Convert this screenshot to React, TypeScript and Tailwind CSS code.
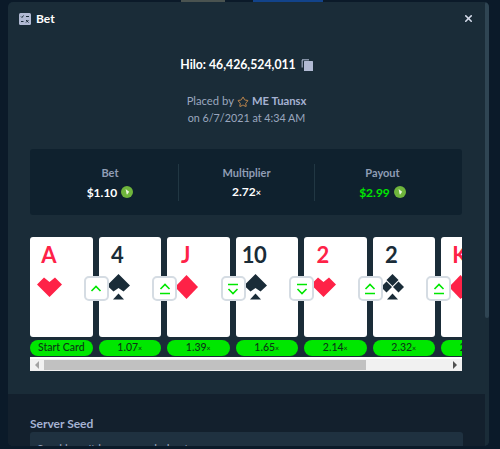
import { Star, X } from "lucide-react";

type Suit = "heart" | "spade" | "diamond" | "club";
type Arrow = "up" | "upEq" | "downEq";

interface CardData {
  rank: string;
  suit: Suit;
  payout: string;
  arrow?: Arrow;
}

const cards: CardData[] = [
  { rank: "A", suit: "heart", payout: "Start Card" },
  { rank: "4", suit: "spade", payout: "1.07", arrow: "up" },
  { rank: "J", suit: "diamond", payout: "1.39", arrow: "upEq" },
  { rank: "10", suit: "spade", payout: "1.65", arrow: "downEq" },
  { rank: "2", suit: "heart", payout: "2.14", arrow: "downEq" },
  { rank: "2", suit: "club", payout: "2.32", arrow: "upEq" },
  { rank: "K", suit: "diamond", payout: "2.72", arrow: "upEq" },
];

function SuitIcon({ suit }: { suit: Suit }) {
  if (suit === "heart") {
    return (
      <svg width="25" height="26" viewBox="0 0 25 26" fill="#fe2247">
        <path d="M7 3.5 12.5 8 18 3.5 25 10.5 12.5 23 0 10.5Z" />
      </svg>
    );
  }
  if (suit === "diamond") {
    return (
      <svg width="25" height="26" viewBox="0 0 25 26" fill="#fe2247">
        <path d="M12.5 1 24 13 12.5 25 1 13Z" />
      </svg>
    );
  }
  if (suit === "spade") {
    return (
      <svg width="25" height="26" viewBox="0 0 25 26" fill="#1a2c38">
        <path d="M12.5 0 24 11.5 17.5 17.5 12.5 14 7.5 17.5 1 11.5Z" />
        <path d="M12.5 19.5 18 25.5H7Z" />
      </svg>
    );
  }
  return (
    <svg width="25" height="26" viewBox="0 0 25 26" fill="#1a2c38">
      <path d="M12.5 0 18.5 6 12.5 12 6.5 6Z" />
      <path d="M6.5 7.5 12 13 6.5 18.5 1 13Z" />
      <path d="M18.5 7.5 24 13 18.5 18.5 13 13Z" />
      <path d="M12.5 19.5 18 25.5H7Z" />
    </svg>
  );
}

function ArrowIcon({ arrow }: { arrow: Arrow }) {
  return (
    <svg width="14" height="14" viewBox="0 0 14 14" fill="none" stroke="#00e700" strokeWidth="1.6">
      {arrow === "up" && <path d="M2.5 9 7 4.5 11.5 9" />}
      {arrow === "upEq" && (
        <>
          <path d="M2.5 7 7 2.5 11.5 7" />
          <path d="M2 11.5H12" />
        </>
      )}
      {arrow === "downEq" && (
        <>
          <path d="M2 2.5H12" />
          <path d="M2.5 7 7 11.5 11.5 7" />
        </>
      )}
    </svg>
  );
}

function Coin() {
  return (
    <svg width="12" height="12" viewBox="0 0 12 12">
      <circle cx="6" cy="6" r="6" fill="#6fb53c" />
      <path d="M4.6 3 8.2 5.8 6 8.8 5.4 7.2Z" fill="#e8f5dc" />
    </svg>
  );
}

function PlayingCard({ card }: { card: CardData }) {
  const red = card.suit === "heart" || card.suit === "diamond";
  return (
    <div className="flex w-[62.5px] shrink-0 flex-col">
      <div className="relative flex h-[100px] shrink-0 flex-col rounded-[3px] bg-white pl-[6px] pt-[1px]">
        <div
          className={`flex h-[36px] w-[25px] shrink-0 justify-center text-[22px] font-bold leading-[34px] tracking-tight ${
            red ? "text-[#fe2247]" : "text-[#1a2c38]"
          }`}
        >
          {card.rank}
        </div>
        <div className="pl-[1px]">
          <SuitIcon suit={card.suit} />
        </div>
        {card.arrow && (
          <div className="absolute left-[-15px] top-[39px] flex h-[25px] w-[25px] items-center justify-center rounded-[5px] border-2 border-[#d5dce3] bg-white">
            <ArrowIcon arrow={card.arrow} />
          </div>
        )}
      </div>
      <div className="mt-[3px] flex h-[15.5px] shrink-0 items-center justify-center rounded-full bg-[#00e700] text-[10.5px] font-medium text-[#0b3416]">
        {card.payout}
        {card.arrow && <span className="text-[7px]">×</span>}
      </div>
    </div>
  );
}

function Stat({ label, children }: { label: string; children: React.ReactNode }) {
  return (
    <div className="flex flex-col items-center gap-[5px] border-l border-[#213743] py-[1px] first:border-l-0">
      <div className="text-[11px] font-bold leading-[15px] text-[#8f9db5]">{label}</div>
      <div className="flex h-[15px] items-center gap-1 text-[12px] font-bold leading-[15px]">{children}</div>
    </div>
  );
}

export default function App() {
  return (
    <div className="flex h-[449px] w-[500px] flex-col overflow-hidden bg-[#0b1a29] font-['Lato',sans-serif] text-white">
      <div className="flex h-[2px] shrink-0 pl-[181px]">
        <div className="w-[44px] bg-[#4a5350]" />
        <div className="ml-[28px] w-[70px] bg-[#12438a]" />
      </div>

      <div className="ml-[8px] flex h-[444px] w-[481px] shrink-0 overflow-hidden rounded-[5px] bg-[#1a2c38]">
        <div className="flex w-[477px] shrink-0 flex-col">
          <div className="flex h-[32px] shrink-0 items-center pl-[11px] pr-[11px] pt-[1px]">
            <svg width="12" height="12" viewBox="0 0 12 12" fill="none">
              <rect width="12" height="12" rx="1.5" fill="#b1bad3" />
              <path d="M2 3.5 3 4.5 4.5 2.5M7 3.5H10M2 8.5H4.5M7 7 9.5 9.5M9.5 7 7 9.5" stroke="#1a2c38" strokeWidth="1" />
            </svg>
            <span className="ml-[5px] text-[12px] font-bold">Bet</span>
            <X className="ml-auto text-[#d5dceb]" size={11} strokeWidth={3.5} />
          </div>

          <div className="mt-[23px] flex h-[16px] shrink-0 items-center justify-center gap-[5px] text-[12.25px] font-bold">
            <span>Hilo: 46,426,524,011</span>
            <svg width="12" height="12" viewBox="0 0 12 12" fill="#b1bad3">
              <path d="M0.5 1H2V8.5H0.5Z" opacity="0.7" />
              <path d="M1 0H8V1.5H1Z" opacity="0.7" />
              <rect x="3" y="2" width="9" height="10" rx="0.5" />
            </svg>
          </div>

          <div className="mt-[20px] flex h-[17px] shrink-0 items-center justify-center text-[11.25px] text-[#9aa7bf]">
            <span>Placed by</span>
            <Star className="mx-[3px] text-[#c58a4e]" size={12} strokeWidth={2} />
            <span className="font-bold text-[#a5b2d2]">ME Tuansx</span>
          </div>
          <div className="flex h-[17px] shrink-0 items-center justify-center text-[10.75px] text-[#9aa7bf]">
            on 6/7/2021 at 4:34 AM
          </div>

          <div className="mx-[22px] mt-[22px] grid h-[66px] w-[432px] shrink-0 grid-cols-3 items-center rounded-[3px] bg-[#0f212e] px-[12px]">
            <Stat label="Bet">
              <span>$1.10</span>
              <Coin />
            </Stat>
            <Stat label="Multiplier">
              <span>
                2.72<span className="text-[9px]">×</span>
              </span>
            </Stat>
            <Stat label="Payout">
              <span className="text-[#00e700]">$2.99</span>
              <Coin />
            </Stat>
          </div>

          <div className="mx-[22px] mt-[22px] w-[432px] shrink-0 overflow-hidden">
            <div className="flex gap-[6px]">
              {cards.map((card, i) => (
                <PlayingCard key={i} card={card} />
              ))}
            </div>
            <div className="mt-[1px] flex h-[14px] items-center border-t-2 border-white bg-[#f1f1f1] pl-[5px] pr-[5px]">
              <span className="h-0 w-0 border-y-[4px] border-r-[4px] border-y-transparent border-r-[#a3a3a3]" />
              <div className="ml-[5px] h-[10px] w-[322px] bg-[#c1c1c1]" />
              <span className="ml-auto h-0 w-0 border-y-[4px] border-l-[4px] border-y-transparent border-l-[#505050]" />
            </div>
          </div>

          <div className="mt-[23px] h-[60px] shrink-0 bg-[#13202d] px-[22px] pt-[22px]">
            <div className="text-[12px] font-bold leading-[16px] text-[#a5b2d2]">Server Seed</div>
            <div className="h-[40px] rounded-[3px] bg-[#1f3140] px-[7px] pt-[8px] text-[11.6px] font-medium text-[#8f9db5]">
              Seed hasn&apos;t been revealed yet
            </div>
          </div>
        </div>
        <div className="w-[4px] shrink-0 bg-[#1a2c38]">
          <div className="h-[316px] w-[4px] rounded-full bg-[#2f4553]" />
        </div>
      </div>
    </div>
  );
}
